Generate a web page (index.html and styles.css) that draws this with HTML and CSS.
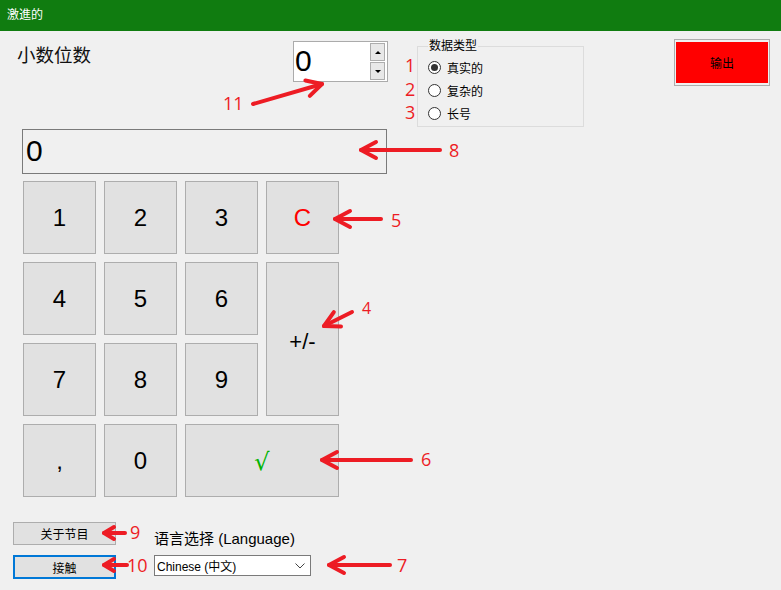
FILE: index.html
```html
<!DOCTYPE html>
<html>
<head>
<meta charset="utf-8">
<link rel="stylesheet" href="styles.css">
</head>
<body>
<div class="window">
  <div class="titlebar">激進的</div>
  <div class="top">
    <div class="decimals-label">小数位数</div>
    <div class="spinner">
      <span class="spinner-value">0</span>
      <div class="spin-btns">
        <div class="spin-btn"><span class="tri-up"></span></div>
        <div class="spin-btn"><span class="tri-down"></span></div>
      </div>
    </div>
    <fieldset class="group">
      <legend class="group-legend">数据类型</legend>
      <div class="radio-row"><span class="radio checked"></span><span>真实的</span></div>
      <div class="radio-row"><span class="radio"></span><span>复杂的</span></div>
      <div class="radio-row"><span class="radio"></span><span>长号</span></div>
    </fieldset>
    <div class="output-btn"><div class="output-inner">输出</div></div>
  </div>

  <div class="display">0</div>

  <div class="keypad">
    <div class="key">1</div>
    <div class="key">2</div>
    <div class="key">3</div>
    <div class="key key-clear">C</div>
    <div class="key">4</div>
    <div class="key">5</div>
    <div class="key">6</div>
    <div class="key key-sign">+/-</div>
    <div class="key">7</div>
    <div class="key">8</div>
    <div class="key">9</div>
    <div class="key">,</div>
    <div class="key">0</div>
    <div class="key key-ok">√</div>
  </div>

  <div class="bottom">
    <div class="btn">关于节目</div>
    <div class="lang-label">语言选择 (Language)</div>
    <div class="btn btn-focus">接触</div>
    <div class="select">
      <span>Chinese (中文)</span>
      <svg class="chev" width="10" height="6" viewBox="0 0 10 6"><path d="M0.5 0.5 L5 5 L9.5 0.5" fill="none" stroke="#444" stroke-width="1"/></svg>
    </div>
  </div>

  <svg class="annotations" width="781" height="590" viewBox="0 0 781 590">
    <defs>
      <marker id="ah" viewBox="-4 -12 26 24" markerWidth="26" markerHeight="24" refX="17" refY="0" orient="auto" markerUnits="userSpaceOnUse">
        <path d="M2 -8 L17 0 L2 8" fill="none" stroke="#ed1c24" stroke-width="4" stroke-linecap="round" stroke-linejoin="round"/>
      </marker>
      <marker id="ahs" viewBox="-4 -10 22 20" markerWidth="22" markerHeight="20" refX="13" refY="0" orient="auto" markerUnits="userSpaceOnUse">
        <path d="M3 -6 L13 0 L3 6" fill="none" stroke="#ed1c24" stroke-width="4" stroke-linecap="round" stroke-linejoin="round"/>
      </marker>
    </defs>
    <g stroke="#ed1c24" stroke-width="4" stroke-linecap="round" fill="none">
      <line x1="253" y1="104" x2="322" y2="84" marker-end="url(#ah)"/>
      <line x1="440" y1="150" x2="361" y2="150" marker-end="url(#ah)"/>
      <line x1="381" y1="219" x2="335" y2="219" marker-end="url(#ah)"/>
      <line x1="352" y1="312" x2="324" y2="326" marker-end="url(#ah)"/>
      <line x1="411" y1="460" x2="322" y2="460" marker-end="url(#ah)"/>
      <line x1="125" y1="533" x2="104" y2="533" marker-end="url(#ahs)"/>
      <line x1="127" y1="565" x2="104" y2="565" marker-end="url(#ahs)"/>
      <line x1="390" y1="565" x2="329" y2="565" marker-end="url(#ah)"/>
    </g>
    <g class="anno-text">
      <text x="223" y="110">11</text>
      <text x="449" y="157">8</text>
      <text x="391" y="227">5</text>
      <text x="362" y="314" class="small">4</text>
      <text x="421" y="466">6</text>
      <text x="130" y="539">9</text>
      <text x="127" y="572">10</text>
      <text x="397" y="572">7</text>
      <text x="405" y="72">1</text>
      <text x="405" y="96">2</text>
      <text x="405" y="119">3</text>
    </g>
  </svg>
</div>
</body>
</html>
```
FILE: styles.css
```css
* { box-sizing: border-box; }

body {
  margin: 0;
  font-family: "Liberation Sans", "Noto Sans CJK SC", sans-serif;
  background: #f0f0f0;
}

.window {
  position: relative;
  width: 781px;
  height: 590px;
  background: #f0f0f0;
  overflow: hidden;
}

.titlebar {
  height: 31px;
  background: #107c10;
  color: #fff;
  font-size: 12px;
  line-height: 31px;
  padding-left: 7px;
}

.top {
  display: flex;
  align-items: flex-start;
  height: 98px;
  padding-top: 10px;
}

.decimals-label {
  margin-left: 17px;
  width: 276px;
  margin-top: 2px;
  font-size: 18.5px;
  line-height: 26px;
  color: #111;
}

.spinner {
  display: flex;
  width: 95px;
  height: 41px;
  border: 1px solid #ababab;
  background: #fff;
}

.spinner-value {
  flex: 1;
  font-size: 30px;
  line-height: 38px;
  padding-left: 1px;
  color: #000;
}

.spin-btns {
  display: flex;
  flex-direction: column;
  gap: 1px;
  width: 15px;
  margin: 1px 2px 1px 0;
}

.spin-btn {
  flex: 1;
  display: flex;
  align-items: center;
  justify-content: center;
  border: 1px solid #adadad;
  background: #e8e8e8;
}

.tri-up {
  width: 0; height: 0;
  border-left: 3px solid transparent;
  border-right: 3px solid transparent;
  border-bottom: 3px solid #000;
}

.tri-down {
  width: 0; height: 0;
  border-left: 3px solid transparent;
  border-right: 3px solid transparent;
  border-top: 3px solid #000;
}

.group {
  margin: -1px 0 0 29px;
  width: 167px;
  height: 87px;
  border: 1px solid #dcdcdc;
  padding: 4px 0 0 10px;
  min-width: 0;
  font-size: 12px;
}

.group-legend {
  padding: 0 1px;
  margin-left: 0;
  font-size: 12px;
  line-height: 12px;
}

.radio-row {
  display: flex;
  align-items: center;
  height: 23px;
  gap: 6px;
  font-size: 12px;
}

.radio {
  width: 13px;
  height: 13px;
  border: 1px solid #333;
  border-radius: 50%;
  background: #fff;
  display: flex;
  align-items: center;
  justify-content: center;
}

.radio.checked::after {
  content: "";
  width: 7px;
  height: 7px;
  border-radius: 50%;
  background: #333;
}

.output-btn {
  margin: -2px 0 0 90px;
  width: 96px;
  height: 47px;
  border: 1px solid #adadad;
  padding: 2px 1px;
  background: #f0f0f0;
}

.output-inner {
  height: 100%;
  background: #ff0000;
  display: flex;
  align-items: center;
  justify-content: center;
  font-size: 12px;
  color: #000;
}

.display {
  margin-left: 22px;
  width: 365px;
  height: 45px;
  border: 1px solid #7a7a7a;
  font-size: 30px;
  line-height: 42px;
  padding-left: 3px;
  color: #000;
}

.keypad {
  margin: 7px 0 0 23px;
  display: grid;
  grid-template-columns: repeat(4, 73px);
  grid-template-rows: repeat(4, 73px);
  gap: 8px;
}

.key {
  background: #e1e1e1;
  border: 1px solid #adadad;
  display: flex;
  align-items: center;
  justify-content: center;
  font-size: 24px;
  color: #000;
}

.key-clear { color: #ff0000; }

.key-sign {
  grid-column: 4;
  grid-row: 2 / span 2;
  font-size: 22px;
  padding-top: 5px;
}

.key-ok {
  grid-column: 3 / span 2;
  grid-row: 4;
  color: #00b400;
  font-family: "DejaVu Sans", sans-serif;
  font-size: 24px;
  padding-top: 2px;
}

.bottom {
  margin: 25px 0 0 13px;
  display: grid;
  grid-template-columns: 141px 157px;
  grid-template-rows: 23px 24px;
  row-gap: 10px;
}

.btn {
  width: 103px;
  height: 100%;
  background: #e1e1e1;
  border: 1px solid #adadad;
  display: flex;
  align-items: center;
  justify-content: center;
  font-size: 12px;
  color: #000;
}

.btn-focus {
  border: 2px solid #0078d7;
}

.lang-label {
  align-self: end;
  margin-bottom: -3px;
  font-size: 15px;
  line-height: 18px;
  color: #000;
}

.select {
  height: 21px;
  border: 1px solid #7a7a7a;
  background: #fff;
  display: flex;
  align-items: center;
  justify-content: space-between;
  padding: 0 5px 0 2px;
  font-size: 12px;
  color: #000;
}

.chev { display: block; }

.annotations {
  position: absolute;
  top: 0;
  left: 0;
  pointer-events: none;
}

.anno-text text {
  fill: #ed1c24;
  font-family: "Open Sans", "Liberation Sans", sans-serif;
  font-size: 18px;
}

.anno-text text.small { font-size: 16px; }
```
